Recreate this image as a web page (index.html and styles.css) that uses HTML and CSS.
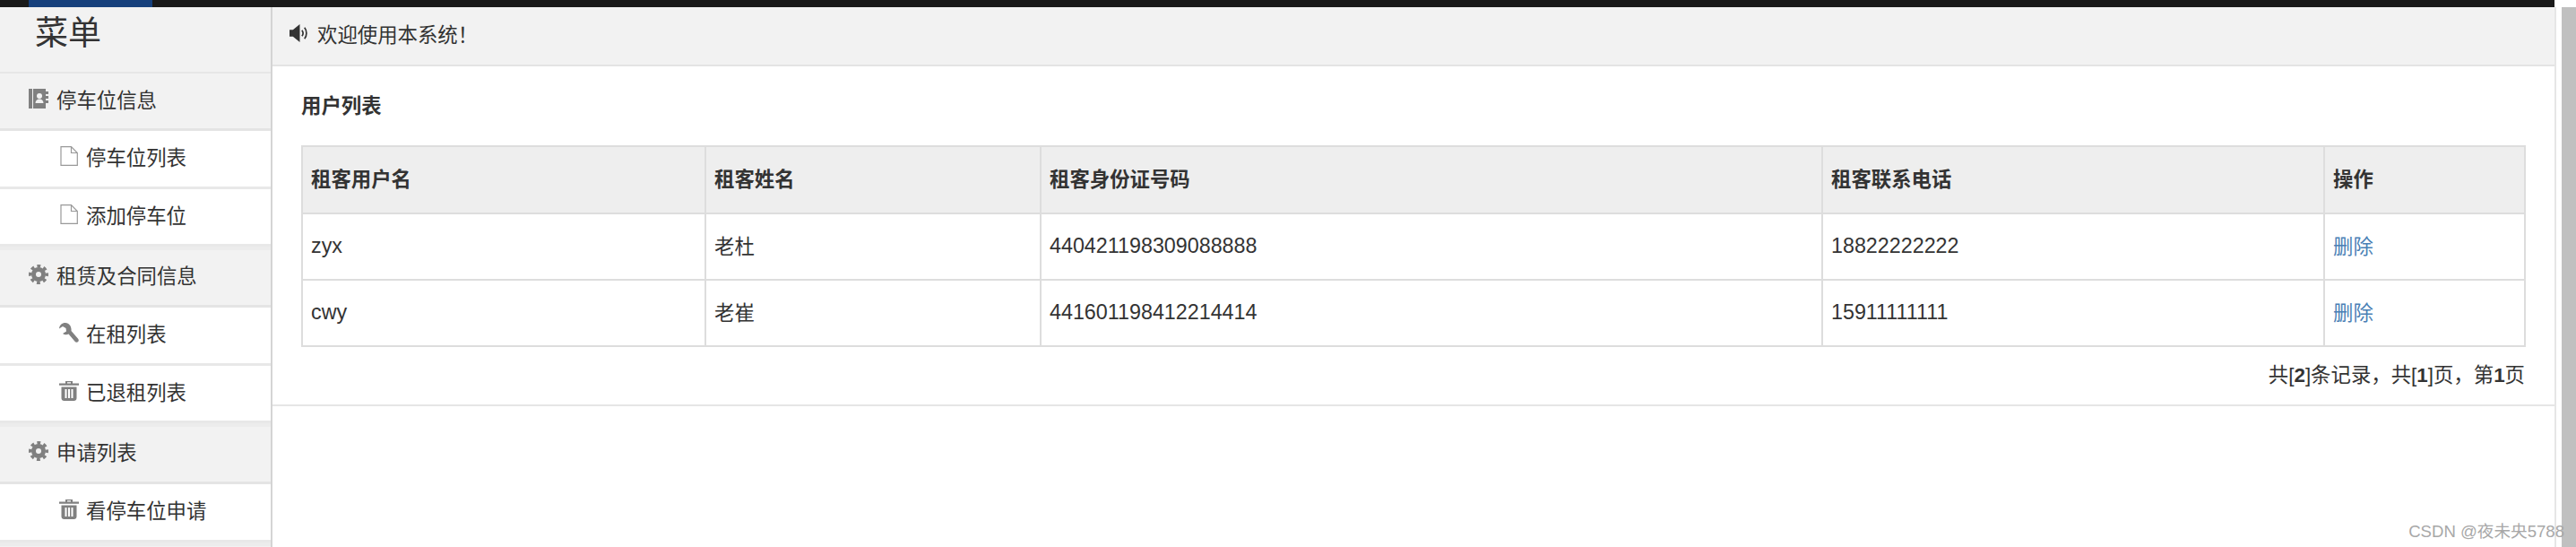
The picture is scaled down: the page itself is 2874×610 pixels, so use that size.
FILE: index.html
```html
<!DOCTYPE html>
<html lang="zh-CN">
<head>
  <meta charset="UTF-8">
  <title>用户列表</title>
  <link rel="stylesheet" href="styles.css">
</head>
<body>
  <svg class="sprite" xmlns="http://www.w3.org/2000/svg">
    <symbol id="i-book" viewBox="0 0 22 22">
      <path d="M0 0h19v3h3v3h-3v2h3v3h-3v2h3v3h-3v6H0z" fill="currentColor"/>
      <path d="M4 0h1v22H4z" fill="#f2f2f2"/>
      <circle cx="12" cy="8" r="3" fill="#f2f2f2"/>
      <path d="M7.500 16c0-3 2-4.500 4.500-4.500s4.500 1.500 4.500 4.500z" fill="#f2f2f2"/>
    </symbol>
    <symbol id="i-file" viewBox="0 0 20 22">
      <path d="M1 .7h11.500l6.800 6.800v13.800H1zM12.500 .7v6.800h6.800" fill="none" stroke="currentColor" stroke-width="1.200"/>
    </symbol>
    <symbol id="i-cog" viewBox="0 0 22 22">
      <circle cx="11" cy="11" r="9.200" fill="none" stroke="currentColor" stroke-width="3.600" stroke-dasharray="3.800 3.430" stroke-dashoffset="1.900"/>
      <circle cx="11" cy="11" r="5.500" fill="none" stroke="currentColor" stroke-width="5"/>
    </symbol>
    <symbol id="i-wrench" viewBox="0 0 22 22">
      <path d="M7 0C3 0 .5 2.500 0 6.500L4 4l3.500 2 .5 3.500L4 12c2 1.500 4.500 1.500 6.500.5l7 8.300c1 1.200 2.800 1.200 3.700.2.900-1 .8-2.600-.3-3.600L13.500 9C14 4.500 11.500 0 7 0z" fill="currentColor"/>
    </symbol>
    <symbol id="i-trash" viewBox="0 0 22 22">
      <path d="M7 2.500V0h8v2.500h7v2.300H0V2.500zM9 1.300v1.200h4V1.300zM2.500 6.500h17V19c0 1.700-1.300 3-3 3h-11c-1.700 0-3-1.300-3-3z" fill="currentColor" fill-rule="evenodd"/>
      <path d="M6.500 9h2v10h-2zM10 9h2v10h-2zM13.500 9h2v10h-2z" fill="#fff"/>
    </symbol>
    <symbol id="i-sound" viewBox="0 0 23 22">
      <path d="M0 7h4l8-6.500v21L4 15H0z" fill="currentColor"/>
      <path d="M14.500 7.500c1.500 2 1.500 5 0 7M17.500 4.500c3 3.500 3 9.500 0 13" fill="none" stroke="currentColor" stroke-width="1.800"/>
    </symbol>
  </svg>

  <div class="topbar">
    <div class="topbar-tab"></div>
  </div>

  <div class="layout">
    <div class="sidebar">
      <div class="sidebar-title">菜单</div>
      <div class="menu-section first"><svg class="icon"><use href="#i-book"/></svg>停车位信息</div>
      <div class="menu-item"><svg class="icon light"><use href="#i-file"/></svg>停车位列表</div>
      <div class="menu-item"><svg class="icon light"><use href="#i-file"/></svg>添加停车位</div>
      <div class="menu-section"><svg class="icon"><use href="#i-cog"/></svg>租赁及合同信息</div>
      <div class="menu-item"><svg class="icon"><use href="#i-wrench"/></svg>在租列表</div>
      <div class="menu-item"><svg class="icon"><use href="#i-trash"/></svg>已退租列表</div>
      <div class="menu-section"><svg class="icon"><use href="#i-cog"/></svg>申请列表</div>
      <div class="menu-item"><svg class="icon"><use href="#i-trash"/></svg>看停车位申请</div>
      <div class="menu-section"></div>
    </div>

    <div class="main">
      <div class="notice"><svg class="icon dark"><use href="#i-sound"/></svg>欢迎使用本系统！</div>
      <div class="panel">
        <h2 class="panel-title">用户列表</h2>
        <table class="user-table">
          <colgroup>
            <col class="col-user">
            <col class="col-name">
            <col class="col-id">
            <col class="col-phone">
            <col class="col-op">
          </colgroup>
          <thead>
            <tr>
              <th>租客用户名</th>
              <th>租客姓名</th>
              <th>租客身份证号码</th>
              <th>租客联系电话</th>
              <th>操作</th>
            </tr>
          </thead>
          <tbody>
            <tr>
              <td class="num">zyx</td>
              <td>老杜</td>
              <td class="num">440421198309088888</td>
              <td class="num">18822222222</td>
              <td><a href="#">删除</a></td>
            </tr>
            <tr>
              <td class="num">cwy</td>
              <td>老崔</td>
              <td class="num">441601198412214414</td>
              <td class="num">15911111111</td>
              <td><a href="#">删除</a></td>
            </tr>
          </tbody>
        </table>
        <div class="pager">共[<b>2</b>]条记录，共[<b>1</b>]页，第<b>1</b>页</div>
      </div>
    </div>

    <div class="gutter"></div>
    <div class="scrollbar"></div>
  </div>

  <div class="watermark">CSDN @夜未央5788</div>
</body>
</html>
```

FILE: styles.css
```css
* {
  box-sizing: border-box;
}

html, body {
  height: 100%;
  margin: 0;
  overflow: hidden;
}

body {
  font-family: "Liberation Sans", "Noto Sans CJK SC", sans-serif;
  font-size: 22.4px;
  color: #333;
  background-color: #fff;
}

.sprite {
  display: none;
}

.topbar {
  height: 8px;
  width: 2850px;
  padding-left: 32px;
  background-color: #1a1a1a;
}

.topbar-tab {
  width: 138px;
  height: 8px;
  background-color: #16407c;
}

.layout {
  display: flex;
  height: 602px;
}

.sidebar {
  width: 304px;
  flex: none;
  overflow: hidden;
  border-right: 2px solid #d4d4d4;
}

.sidebar-title {
  height: 74px;
  padding: 0 0 12px 39px;
  font-size: 37px;
  line-height: 60px;
  background-color: #f2f2f2;
  border-bottom: 2px solid #e6e6e6;
}

.icon {
  width: 22px;
  height: 22px;
  flex: none;
  margin-right: 9px;
  color: #808080;
}

.icon.light {
  color: #999;
}

.icon.dark {
  color: #333;
}

.menu-section {
  display: flex;
  align-items: center;
  height: 68px;
  padding: 0 0 7px 32px;
  background-color: #f2f2f2;
  border-top: 4px solid #e4e4e4;
  border-bottom: 3px solid #e4e4e4;
}

.menu-section.first {
  height: 64px;
  padding-bottom: 5px;
  border-top: none;
}

.menu-item {
  display: flex;
  align-items: center;
  height: 64.5px;
  padding: 0 0 5px 66px;
  background-color: #fff;
  border-bottom: 3px solid #e8e8e8;
}

.menu-item .icon {
  margin-right: 8px;
}

.menu-item + .menu-section {
  border-top-color: #ececec;
}

.main {
  flex: 1;
  min-width: 0;
}

.notice {
  display: flex;
  align-items: center;
  height: 66px;
  padding: 0 0 6px 19px;
  background-color: #f2f2f2;
  border-bottom: 2px solid #e4e4e4;
}

.panel {
  height: 379px;
  padding: 0 33px 0 32px;
  border-bottom: 2px solid #e6e6e6;
}

.panel-title {
  margin: 0;
  height: 88px;
  padding-top: 31px;
  font-size: 22.4px;
  line-height: 28px;
  font-weight: bold;
}

.user-table {
  width: 2480px;
  table-layout: fixed;
  border-collapse: collapse;
}

.col-user { width: 450px; }
.col-name { width: 374px; }
.col-id { width: 872px; }
.col-phone { width: 560px; }
.col-op { width: 224px; }

.user-table th,
.user-table td {
  padding: 0 9px 5px;
  text-align: left;
  border: 2px solid #ddd;
}

.user-table th {
  height: 75px;
  font-weight: bold;
  background-color: #eee;
}

.user-table td {
  height: 74px;
}

.user-table td.num {
  padding-bottom: 1px;
  font-size: 23.3px;
}

.user-table a {
  color: #4a80b5;
  text-decoration: none;
}

.pager {
  margin-top: 18px;
  line-height: 28px;
  text-align: right;
}

.gutter {
  width: 8px;
  flex: none;
  border-left: 2px solid #e6e6e6;
}

.scrollbar {
  width: 16px;
  flex: none;
  background-color: #c0c0c0;
}

.watermark {
  position: absolute;
  right: 13px;
  bottom: 6px;
  font-size: 18.6px;
  color: #a8a8a8;
}
```
